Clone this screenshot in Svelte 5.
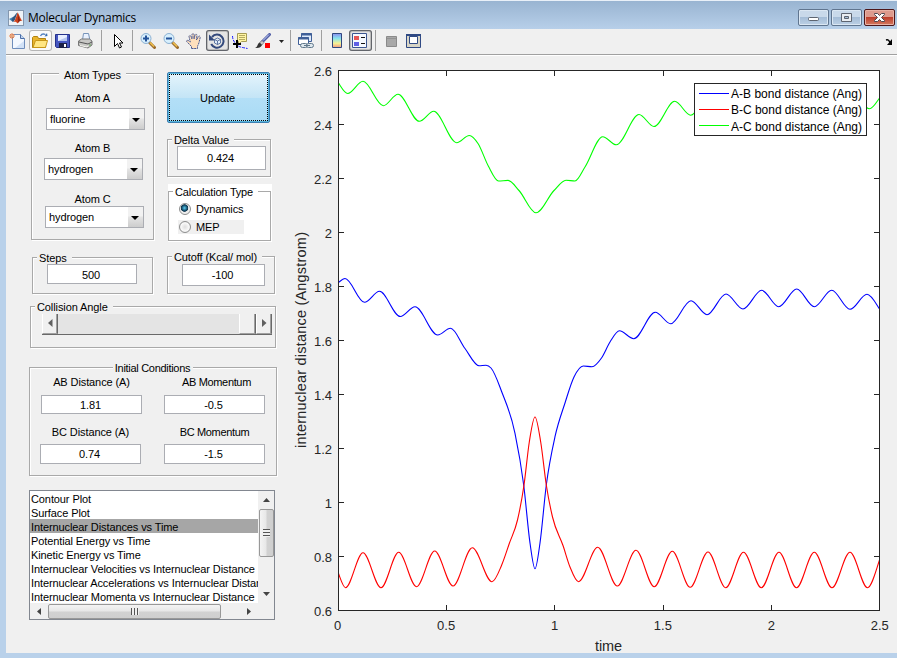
<script lang="ts">
    type Point = [number, number];

    let selectedPlot = $state(2);
    let calculation = $state('Dynamics');

    const plots = [
        'Contour Plot',
        'Surface Plot',
        'Internuclear Distances vs Time',
        'Potential Energy vs Time',
        'Kinetic Energy vs Time',
        'Internuclear Velocities vs Internuclear Distance',
        'Internuclear Accelerations vs Internuclear Distance',
        'Internuclear Momenta vs Internuclear Distance'
    ];

    const atoms = [
        { id: 'a', label: 'Atom A', value: 'fluorine' },
        { id: 'b', label: 'Atom B', value: 'hydrogen' },
        { id: 'c', label: 'Atom C', value: 'hydrogen' }
    ];

    // turning points of each trajectory
    const ab: Point[] = [
        [338.5, 282.5], [345, 278.5], [364.5, 302.3], [379.5, 291.3], [400.3, 316.5], [415, 306.8],
        [437.7, 335], [450.5, 328.3], [465, 348.5], [479, 365.7], [486, 365.3], [491, 368], [501.7, 391.7],
        [515, 433.3], [523.7, 485], [530, 543], [535, 568.7], [540, 543], [546.3, 485], [555, 436.7],
        [565, 403], [574, 377], [583.3, 366], [592, 366.7], [601.5, 358], [610, 342], [619.5, 330.8],
        [633.7, 338.7], [655.3, 312.3], [670.7, 323.7], [691, 300.7], [707, 314.7], [726, 294],
        [743, 309], [761.7, 290.3], [778.7, 306.7], [796.7, 289], [814.3, 306.7], [831.7, 290.3],
        [850, 309.3], [867, 294.3], [879.5, 309]
    ];
    const bc: Point[] = [
        [338.5, 573.5], [345.5, 587.7], [363, 552.7], [381, 587.7], [398.7, 552.3], [416.5, 586.7],
        [434.7, 551], [453, 586], [472.3, 547.7], [492, 581.7], [501.7, 565], [509.3, 543.5],
        [517.5, 520], [524, 485], [529.3, 442], [535, 417], [540.7, 442], [546.3, 485], [552.5, 517],
        [563, 545.5], [570, 567], [578.5, 581.7], [597.7, 547.3], [617.3, 586], [636, 550.3],
        [654.2, 586.7], [672.3, 551.3], [690.2, 587.3], [708, 552], [725.7, 587.7], [743.5, 552.3],
        [761.3, 587.7], [779, 552.3], [796.5, 587.7], [814.3, 552.3], [832, 587.7], [850, 552.3],
        [867.5, 587.7], [879.5, 560]
    ];
    const ac: Point[] = [
        [338.5, 83], [347.7, 93.5], [363, 81.3], [383.3, 105.7], [398, 94.3], [419.3, 121.3],
        [433.7, 111.3], [456.7, 142.7], [469.3, 135.5], [478, 143.5], [488.3, 166], [498.5, 181],
        [508, 180.4], [519, 190.5], [536, 212.8], [554, 190.5], [566, 180.2], [575, 181],
        [585, 167], [602.7, 136.7], [616.3, 144.8], [639, 114.5], [654, 126.5], [674.7, 101.3],
        [690.7, 115.2], [710, 95], [727, 108], [746, 92], [763, 106], [781, 92], [798, 104],
        [816, 92], [834, 106], [852, 94], [869.5, 108.8], [879.5, 98]
    ];

    // monotone cubic interpolation, flat at every extremum
    function curve(pts: Point[]) {
        const d = pts.slice(1).map((p, i) => (p[1] - pts[i][1]) / (p[0] - pts[i][0]));
        const m = pts.map((_, i) => {
            if (i === 0) return d[0] * 1.3;
            if (i === pts.length - 1) return d[i - 1] * 1.3;
            const a = d[i - 1];
            const b = d[i];
            if (a * b <= 0) return 0;
            const h0 = pts[i][0] - pts[i - 1][0];
            const h1 = pts[i + 1][0] - pts[i][0];
            const slope = (a * h1 + b * h0) / (h0 + h1);
            return Math.sign(slope) * Math.min(Math.abs(slope), 3 * Math.abs(a), 3 * Math.abs(b));
        });
        let path = `M${pts[0][0]},${pts[0][1]}`;
        for (let i = 1; i < pts.length; i++) {
            const [x0, y0] = pts[i - 1];
            const [x1, y1] = pts[i];
            const h = (x1 - x0) / 3;
            path += `C${x0 + h},${y0 + m[i - 1] * h} ${x1 - h},${y1 - m[i] * h} ${x1},${y1}`;
        }
        return path;
    }

    const series = [
        { name: 'A-B bond distance (Ang)', color: '#0000ff', path: curve(ab) },
        { name: 'B-C bond distance (Ang)', color: '#ff0000', path: curve(bc) },
        { name: 'A-C bond distance (Ang)', color: '#00ff00', path: curve(ac) }
    ];

    const xTicks = ['0', '0.5', '1', '1.5', '2', '2.5'];
    const yTicks = ['2.6', '2.4', '2.2', '2', '1.8', '1.6', '1.4', '1.2', '1', '0.8', '0.6'];
</script>

<div class="window">
    <header class="titlebar">
        <svg class="logo" width="16" height="16" viewBox="0 0 16 16">
            <rect x=".5" y=".5" width="15" height="15" fill="#eef3f8" stroke="#8497ae" />
            <path d="M1 9l4-2 2 2-2 3z" fill="#3f83b5" />
            <path d="M5 7c2-1 3-4 4.500-4.500L7 9.500 5 12 3.500 10z" fill="#31567f" />
            <path d="M9.500 2.500c1.500 1 2.500 6 5 8.500-2-.5-3 0-5 2.500-1-1.500-2-2-4-1.500 2-2 3-6 4-9.500z" fill="#cf431c" />
            <path d="M9.500 3c1 2 0 6 .5 10 1-1.500 1.500-2 2.500-2.500-1.500-2-2-5-3-7.500z" fill="#8c2314" />
        </svg>
        <h1>Molecular Dynamics</h1>
        <div class="controls">
            <button aria-label="Minimize">
                <svg width="29" height="16"><rect x="9.500" y="8.500" width="10" height="3" rx="1" fill="#fff" stroke="#5d6470" /></svg>
            </button>
            <button aria-label="Maximize">
                <svg width="29" height="16"><path d="M9.500 4.500h10v8h-10zM12.500 7.500h4v2h-4z" fill="#e9edf2" fill-rule="evenodd" stroke="#5d6470" /></svg>
            </button>
            <button class="close" aria-label="Close">
                <svg width="29" height="16"><path d="M9.500 4.500h3l2 2 2-2h3v1l-3 3 3 3v1h-3l-2-2-2 2h-3v-1l3-3-3-3z" fill="#fff" stroke="#4f4a52" /></svg>
            </button>
        </div>
    </header>

    <nav class="toolbar">
        <button aria-label="New figure">
            <svg viewBox="0 0 16 16">
                <path d="M3.500 1.500h8l4 4v10h-12z" fill="#f3f8ff" stroke="#6f8ebc" />
                <path d="M6 15h9V8z" fill="#d2e2f7" />
                <path d="M11.500 1.500v4h4" fill="#c3d5ee" stroke="#4b6ea8" />
                <path d="M3 0v6M0 3h6M1 1l4 4M5 1L1 5" stroke="#e98550" stroke-width="1" />
                <circle cx="3" cy="3" r="1.200" fill="#fff0bb" stroke="#c8502a" stroke-width=".6" />
            </svg>
        </button>
        <button class="hover" aria-label="Open file">
            <svg viewBox="0 0 16 16">
                <path d="M.5 14.500v-10l1-1h4l1 2h7v9z" fill="#e9b42c" stroke="#b28310" />
                <path d="M1 14.500l2.500-7h12l-2 7z" fill="#ffe683" stroke="#c79618" />
                <path d="M8.500 3c1-2 3-2.500 5-1.500" fill="none" stroke="#4f7fc0" stroke-width="1.300" />
                <path d="M12.500 3.500l3-.5-.5-3z" fill="#376cae" />
            </svg>
        </button>
        <button aria-label="Save figure">
            <svg viewBox="0 0 16 16">
                <path d="M.5 1.500h14v13h-13l-1-1z" fill="#4657c0" stroke="#25318b" />
                <path d="M3 2h9v6H3z" fill="#e7eeff" />
                <path d="M3 8h9V4z" fill="#b4c4ee" />
                <path d="M4 10h8v5H4z" fill="#1b2047" />
                <path d="M9 11h2v3H9z" fill="#fff" />
            </svg>
        </button>
        <button aria-label="Print figure">
            <svg viewBox="0 0 16 16">
                <path d="M4.500 7l1-6.500h5l1.500 7z" fill="#e9f2ff" stroke="#7794ba" />
                <path d="M.5 8l3-2h8l2.500 2v4l-4 3-9.500-2.500z" fill="#c8c8c5" stroke="#777" />
                <path d="M1 9l9 2 4-2" fill="none" stroke="#555" />
                <path d="M2 12.500l7 1.500 1-1.500" fill="none" stroke="#f7f7ef" />
                <path d="M11 12h2" stroke="#58a34d" />
            </svg>
        </button>
        <i></i>
        <button aria-label="Edit plot">
            <svg viewBox="0 0 16 16"><path d="M5.500 1.500v12l3-3 2 4.500 2-1-2-4h3.500z" fill="#fff" stroke="#000" /></svg>
        </button>
        <i></i>
        <button aria-label="Zoom in">
            <svg viewBox="0 0 16 16">
                <path d="M9.500 9.500l5 5" stroke="#9b6c2d" stroke-width="3" stroke-linecap="round" />
                <path d="M10 9.500l4 4" stroke="#f2c34e" stroke-width="1.500" />
                <circle cx="6" cy="5.500" r="5" fill="#d7effd" stroke="#8bb0d2" />
                <path d="M6 2.500v6M3 5.500h6" stroke="#24539a" stroke-width="2" />
            </svg>
        </button>
        <button aria-label="Zoom out">
            <svg viewBox="0 0 16 16">
                <path d="M9.500 9.500l5 5" stroke="#9b6c2d" stroke-width="3" stroke-linecap="round" />
                <path d="M10 9.500l4 4" stroke="#f2c34e" stroke-width="1.500" />
                <circle cx="6" cy="5.500" r="5" fill="#d7effd" stroke="#8bb0d2" />
                <path d="M3 5.500h6" stroke="#24539a" stroke-width="2" />
            </svg>
        </button>
        <button aria-label="Pan">
            <svg viewBox="0 0 16 16">
                <path d="M5.500 15.500v-2L.7 8.500c-.5-1.200.8-1.500 1.600-1l2 1.500L3 3.500c0-1.300 1.500-1.300 2 0L6 6V1.500c.2-1.200 1.800-1.200 2 0V6l1-4c.5-1.200 2-.8 2 .4L10.500 7l2-3.500c.8-.8 2-.2 1.700 1L13 9.500c-.3 2-1.500 3-1.500 4v2z" fill="#ffe0bd" stroke="#4d5b91" stroke-dasharray="2 .6" />
            </svg>
        </button>
        <button class="pressed" aria-label="Rotate 3D">
            <svg viewBox="0 0 16 16">
                <path d="M3 4a6.500 6.500 0 1 1-.8 7" fill="none" stroke="#33497c" stroke-width="2" />
                <path d="M0 1.500v6h6z" fill="#33497c" />
                <path d="M5.500 6.500l3-1.500 3 1.500v3.500l-3 1.500-3-1.500zM5.500 6.500l3 1.500 3-1.500M8.500 8v3.500" fill="#e1ecf9" stroke="#405c91" stroke-width=".8" />
            </svg>
        </button>
        <button aria-label="Data cursor">
            <svg viewBox="0 0 16 16">
                <path d="M.5 3c0 5 4 10 8 11s5 1 7 1.500" fill="none" stroke="#1c1cff" stroke-dasharray="3 1" />
                <path d="M5.500.5h9v8h-5l-3 3v-3h-1z" fill="#fff5a5" stroke="#a69c55" />
                <path d="M7 2.500h6M7 4.500h6M7 6.500h6" stroke="#b5ab60" />
                <path d="M5 7v8M1 11h8" stroke="#000" stroke-width="2" />
            </svg>
        </button>
        <button aria-label="Brush data">
            <svg viewBox="0 0 16 16">
                <path d="M14.500 1.500L7 9" stroke="#505ea6" stroke-width="3" stroke-linecap="round" />
                <path d="M14 1.500L8 7.500" stroke="#c9d3fa" />
                <path d="M7 7.500L4.500 10 7 12l2-2.500z" fill="#c8c8c8" stroke="#666" stroke-width=".6" />
                <path d="M0 15c3-1 2-4 4.500-5.500L7 12c-1.500 3-4 3-7 3z" fill="#333" />
                <path d="M10 10h5v5h-5z" fill="#f00" />
            </svg>
        </button>
        <button class="dropdown" aria-label="Brush colour">
            <svg viewBox="0 0 12 16"><path d="M4 7h5L6.500 10z" fill="#222" /></svg>
        </button>
        <i></i>
        <button aria-label="Link plot">
            <svg viewBox="0 0 16 16">
                <path d="M3.500.5h10v8h-10z" fill="#dce9fb" stroke="#3f5f97" />
                <path d="M3 1.500h11" stroke="#3f5f97" stroke-width="2" />
                <path d="M.5 4.500h10v7H.5z" fill="#fff" stroke="#3f5f97" />
                <path d="M0 5.500h11" stroke="#3f5f97" stroke-width="2" />
                <rect x="2.500" y="10.500" width="7" height="4" rx="2" fill="#dde6ec" stroke="#60788c" />
                <rect x="8.500" y="10.500" width="7" height="4" rx="2" fill="#dde6ec" stroke="#60788c" />
                <path d="M6 12.500h6" stroke="#60788c" />
            </svg>
        </button>
        <i></i>
        <button aria-label="Insert colorbar">
            <svg viewBox="0 0 16 16">
                <defs>
                    <linearGradient id="bar" x2="0" y2="1">
                        <stop offset="0" stop-color="#8b8df0" />
                        <stop offset=".35" stop-color="#87e4ed" />
                        <stop offset=".7" stop-color="#f7f395" />
                        <stop offset="1" stop-color="#f29a82" />
                    </linearGradient>
                </defs>
                <path d="M3.500.5h9v14h-9z" fill="url(#bar)" stroke="#30487e" />
            </svg>
        </button>
        <button class="pressed" aria-label="Insert legend">
            <svg viewBox="0 0 16 16">
                <path d="M.5.5h14v14H.5z" fill="#f5f9ff" stroke="#3c5690" />
                <path d="M2 3h5v4H2z" fill="#e75656" />
                <path d="M2 9h5v4H2z" fill="#6060e5" />
                <path d="M9 4.500h4M9 10.500h4" stroke="#111" />
            </svg>
        </button>
        <i></i>
        <button aria-label="Hide plot tools">
            <svg viewBox="0 0 16 16"><path d="M3.500 3.500h10v10h-10z" fill="#a8a8a8" stroke="#8a8a8a" /><path d="M4 5.500h9" stroke="#929292" /></svg>
        </button>
        <button aria-label="Show plot tools">
            <svg viewBox="0 0 16 16">
                <path d="M.5 1.500h14v13H.5z" fill="#d8d5c6" stroke="#304a84" />
                <path d="M0 2h15" stroke="#304a84" stroke-width="2" />
                <path d="M3.500 3.500h8v7h-8z" fill="#fff" stroke="#304a84" />
            </svg>
        </button>
        <svg class="dock" viewBox="0 0 8 8"><path d="M1 2q3-1 4 3" fill="none" stroke="#000" stroke-width="1.500" /><path d="M7 1v6H2z" /></svg>
    </nav>

    <main>
        <aside>
            <div class="columns">
                <div class="left">
                    <section class="group atoms">
                        <h2>Atom Types</h2>
                        {#each atoms as atom}
                            <span class="label">{atom.label}</span>
                            <button class="select {atom.id}">
                                {atom.value}
                                <svg width="15" height="20"><path d="M3 9h8l-4 4z" /></svg>
                            </button>
                        {/each}
                    </section>
                    <section class="group steps">
                        <h2>Steps</h2>
                        <div class="field">500</div>
                    </section>
                </div>
                <div class="right">
                    <button class="update"><span>Update</span></button>
                    <section class="group delta">
                        <h2>Delta Value</h2>
                        <div class="field">0.424</div>
                    </section>
                    <div class="calc">
                        <section class="group">
                            <h2>Calculation Type</h2>
                            {#each ['Dynamics', 'MEP'] as type}
                                <button class="radio {type}" onclick={() => (calculation = type)}>
                                    <span class="dot" class:on={calculation === type}></span>{type}
                                </button>
                            {/each}
                        </section>
                    </div>
                    <section class="group cutoff">
                        <h2>Cutoff (Kcal/ mol)</h2>
                        <div class="field">-100</div>
                    </section>
                </div>
            </div>

            <section class="group angle">
                <h2>Collision Angle</h2>
                <div class="slider">
                    <button class="step" aria-label="Decrease"><svg width="14" height="20"><path d="M9.500 5v8L5 9z" /></svg></button>
                    <div class="track"></div>
                    <div class="step thumb"></div>
                    <button class="step" aria-label="Increase"><svg width="14" height="20"><path d="M5 5v8l4.500-4z" /></svg></button>
                </div>
            </section>

            <section class="group initial">
                <h2>Initial Conditions</h2>
                <div class="conditions">
                    <div>
                        <span class="label">AB Distance (A)</span>
                        <div class="field">1.81</div>
                    </div>
                    <div class="momentum">
                        <span class="label">AB Momentum</span>
                        <div class="field">-0.5</div>
                    </div>
                </div>
                <div class="conditions second">
                    <div>
                        <span class="label">BC Distance (A)</span>
                        <div class="field">0.74</div>
                    </div>
                    <div class="momentum">
                        <span class="label">BC Momentum</span>
                        <div class="field">-1.5</div>
                    </div>
                </div>
            </section>

            <div class="listbox">
                <ul>
                    {#each plots as plot, i}
                        <li class:selected={i === selectedPlot}>
                            <button onclick={() => (selectedPlot = i)}>{plot}</button>
                        </li>
                    {/each}
                </ul>
                <div class="vscroll">
                    <svg width="7" height="4"><path d="M0 4L3.500 0 7 4z" /></svg>
                    <div class="handle"><b></b></div>
                    <svg width="7" height="4"><path d="M0 0l3.500 4L7 0z" /></svg>
                </div>
                <div class="hscroll">
                    <svg width="4" height="7"><path d="M4 0L0 3.500 4 7z" /></svg>
                    <div class="handle"><b></b></div>
                    <svg width="4" height="7"><path d="M0 0l4 3.500L0 7z" /></svg>
                </div>
            </div>
        </aside>

        <svg class="plot" viewBox="289 56 608 597">
            <rect x="338.500" y="70.500" width="541" height="540" fill="#fff" />
            {#each series as line}
                <path d={line.path} fill="none" stroke={line.color} stroke-width="1.100" />
            {/each}
            <g class="axes">
                <rect x="338.500" y="70.500" width="541" height="540" />
                {#each xTicks as _, i}
                    <path d="M{338.5 + Math.round(i * 108.2)} 610v-5m0-529v-5" />
                {/each}
                {#each yTicks as _, i}
                    <path d="M339 {70.5 + i * 54}h5m530 0h5" />
                {/each}
            </g>
            <g class="ticks">
                {#each xTicks as tick, i}
                    <text x={337.7 + i * 108.4} y="630" text-anchor="middle">{tick}</text>
                {/each}
                {#each yTicks as tick, i}
                    <text x="332" y={76 + i * 54} text-anchor="end">{tick}</text>
                {/each}
            </g>
            <g class="names">
                <text x="595" y="651" textLength="27">time</text>
                <text transform="translate(306 448) rotate(-90)" textLength="216">internuclear distance (Angstrom)</text>
            </g>
            <rect x="694.500" y="83.500" width="172" height="52" fill="#fff" stroke="#262626" />
            {#each series as line, i}
                <path d="M699 {93.5 + i * 16}h30" stroke={line.color} />
                <text class="key" x="731" y={98 + Math.floor(i * 16.5)} textLength="131">{line.name}</text>
            {/each}
        </svg>
    </main>
</div>

<style>
    :global(body) {
        margin: 0;
        overflow: hidden;
    }
    * {
        box-sizing: border-box;
    }
    h1, h2, ul {
        margin: 0;
        padding: 0;
        font-weight: normal;
    }
    button {
        margin: 0;
        padding: 0;
        border: 0;
        background: none;
        font: inherit;
        color: inherit;
        letter-spacing: inherit;
    }
    svg {
        display: block;
        flex: none;
    }
    .window {
        width: 897px;
        height: 658px;
        display: flex;
        flex-direction: column;
        border: solid #b9d1ea;
        border-width: 0 0 5px 6px;
        background: #f0f0f0;
        font: 11px/14px "Liberation Sans", Arial, sans-serif;
        color: #000;
    }
    .titlebar {
        height: 29px;
        margin-left: -6px;
        padding: 9px 2px 0 8px;
        display: flex;
        align-items: flex-start;
        border-top: 1px solid #e9f0f8;
        background: linear-gradient(#99b4d1, #b7cfe9);
    }
    .titlebar h1 {
        margin: -1px 0 0 4px;
        font: 12px/17px "Open Sans", "Noto Sans", sans-serif;
        letter-spacing: -.28px;
    }
    .controls {
        display: flex;
        gap: 2px;
        margin: -1px 0 0 auto;
    }
    .controls button {
        width: 31px;
        height: 17px;
        border: 1px solid #60758f;
        border-radius: 2px;
        background: linear-gradient(#c9d9ea 45%, #a5bdd7 50%, #bcd0e5);
        box-shadow: inset 0 0 0 1px #dbe7f3;
    }
    .controls .close {
        border-color: #4d1719;
        background: linear-gradient(#dd9a8d 45%, #bd3e2c 50%, #d47b60);
        box-shadow: inset 0 0 0 1px #e9b2a6;
    }
    .controls svg {
        margin-top: -1px;
    }
    .toolbar {
        height: 27px;
        display: flex;
        padding-top: 1px;
        border-bottom: 1px solid #fff;
        box-shadow: inset 0 -1px #a0a0a0;
    }
    .toolbar button {
        width: 23px;
        height: 21px;
        padding: 2px 3px;
        border-radius: 3px;
    }
    .toolbar button svg {
        width: 16px;
        height: 16px;
    }
    .toolbar .hover {
        background: #fafafa;
        box-shadow: inset 0 0 0 1px #b5b5b5;
    }
    .toolbar .pressed {
        background: #e4e4e4;
        box-shadow: inset 0 0 0 1px #62656b, inset 0 0 0 2px #bdbdbd;
    }
    .toolbar .dropdown {
        width: 12px;
        padding: 2px 0;
    }
    .toolbar .dropdown svg {
        width: 12px;
    }
    .toolbar i {
        width: 1px;
        height: 21px;
        margin: 0 4px 0 3px;
        background: #a0a0a0;
    }
    .dock {
        width: 8px;
        height: 8px;
        margin: 8px 4px 0 auto;
    }
    main {
        flex: 1;
        display: flex;
    }
    aside {
        width: 283px;
        padding-left: 23px;
        display: flex;
        flex-direction: column;
        align-items: flex-start;
        letter-spacing: -.1px;
    }
    .columns {
        display: flex;
        margin-left: 2px;
        height: 238px;
    }
    .left {
        width: 136px;
    }
    .group {
        display: flex;
        flex-direction: column;
        align-items: flex-start;
        border: 1px solid #a9a9a9;
        box-shadow: inset 1px 1px #fff, 1px 1px #fff;
    }
    .group h2 {
        height: 14px;
        margin: -7px 0 0 4px;
        padding: 0 5px 0 2px;
        font-size: 11px;
        background: #f0f0f0;
        white-space: nowrap;
    }
    .label {
        height: 14px;
        text-align: center;
        white-space: nowrap;
    }
    .field {
        display: flex;
        align-items: center;
        justify-content: center;
        padding-right: 2px;
        border: 1px solid #abadb3;
        background: #fff;
    }
    .atoms {
        width: 123px;
        height: 167px;
        margin-top: 17px;
    }
    .atoms h2 {
        align-self: center;
        margin: -6px 0 9px;
        padding: 0 5px;
    }
    .atoms .label {
        align-self: center;
    }
    .select {
        display: flex;
        align-items: center;
        justify-content: space-between;
        width: 99px;
        height: 22px;
        flex: none;
        padding-left: 3px;
        border: 1px solid #abadb3;
        background: #fff;
    }
    .select svg {
        background: linear-gradient(#f2f2f2 45%, #e4e4e4 50%, #cdcdcd);
    }
    .select.a {
        margin: 3px 0 11px 14px;
    }
    .select.b {
        margin: 3px 0 12px 12px;
    }
    .select.c {
        margin: 0 0 0 13px;
    }
    .steps {
        width: 121px;
        height: 37px;
        margin: 17px 0 0 1px;
    }
    .steps .field {
        width: 90px;
        height: 20px;
        margin: -1px 0 0 14px;
        padding-top: 1px;
    }
    .update {
        display: block;
        width: 103px;
        height: 51px;
        margin-top: 16px;
        padding: 1px;
        border: 1px solid #3c7fb1;
        border-radius: 2px;
        box-shadow: inset 0 0 0 1px #56b3dc;
        background: linear-gradient(#e5f4fc, #c4e5f6 50%, #b3dff7 51%, #a9dbf5);
    }
    .update span {
        display: flex;
        align-items: center;
        justify-content: center;
        width: 99px;
        height: 47px;
        padding-right: 2px;
        border: 1px dotted #000;
    }
    .delta {
        width: 104px;
        height: 38px;
        margin-top: 16px;
    }
    .delta .field {
        width: 89px;
        height: 24px;
        margin: -1px 0 0 9px;
    }
    .calc {
        width: 104px;
        height: 58px;
        margin: 7px 0 0 1px;
        padding-top: 7px;
        background: #fff;
    }
    .calc .group {
        width: 103px;
        height: 50px;
    }
    .calc h2 {
        margin-left: 4px;
        letter-spacing: -.2px;
        background: #fff;
    }
    .radio {
        display: flex;
        align-items: center;
        height: 14px;
        margin: 3px 0 0 9px;
        width: 66px;
    }
    .radio.MEP {
        background: #f0f0f0;
        margin-top: 4px;
    }
    .dot {
        width: 12px;
        height: 12px;
        margin: 0 5px 0 1px;
        border: 1px solid #8e8f8f;
        border-radius: 50%;
        background: radial-gradient(#dedede, #fafafa 60%, #c0c0c0);
    }
    .dot.on {
        background: radial-gradient(circle at 45% 40%, #5fd0f5 0, #15516f 32%, #12354c 42%, #eee 50%);
    }
    .cutoff {
        width: 108px;
        height: 38px;
        margin-top: 14px;
    }
    .cutoff .field {
        width: 83px;
        height: 22px;
        margin-left: 14px;
    }
    .angle {
        width: 246px;
        height: 42px;
        margin: 12px 0 0 1px;
    }
    .slider {
        display: flex;
        height: 21px;
        margin-left: 11px;
        width: 230px;
        border-bottom: 1px solid #696969;
    }
    .step {
        width: 16px;
        height: 20px;
        border: 1px solid #fff;
        border-top: 0;
        border-right: 1px solid #696969;
        border-bottom: 1px solid #a0a0a0;
        background: #f0f0f0;
        box-shadow: inset -1px 0 #a0a0a0;
    }
    .step path {
        fill: #606060;
    }
    .track {
        flex: 1;
        background: #e4e4e4;
    }
    .thumb {
        width: 17px;
    }
    .initial {
        width: 248px;
        height: 109px;
        margin-top: 19px;
    }
    .initial h2 {
        align-self: center;
        margin-left: 0;
        padding: 0 3px 0 2px;
        letter-spacing: -.3px;
    }
    .conditions {
        display: flex;
        gap: 22px;
        margin-left: 11px;
    }
    .conditions > div {
        width: 101px;
        display: flex;
        flex-direction: column;
    }
    .conditions .label {
        margin-bottom: 6px;
    }
    .conditions .momentum .label {
        padding-left: 4px;
        letter-spacing: -.35px;
    }
    .conditions .field {
        height: 19px;
    }
    .second {
        gap: 23px;
        margin: 11px 0 0 10px;
    }
    .conditions.second .label {
        margin-bottom: 5px;
    }
    .conditions.second .momentum .label {
        padding: 0;
    }
    .conditions.second .field {
        height: 20px;
    }
    .listbox {
        display: grid;
        grid-template: 112px 16px / 228px 16px;
        width: 246px;
        height: 130px;
        margin-top: 14px;
        border: 1px solid #828790;
        background: #f0f0f0;
    }
    .listbox ul {
        list-style: none;
        overflow: hidden;
        background: #fff;
    }
    .listbox li {
        height: 14px;
        padding: 1px 0 0 1px;
        white-space: nowrap;
    }
    .listbox li button {
        display: block;
        white-space: nowrap;
        text-align: left;
    }
    .selected {
        background: #a6a6a6;
    }
    .vscroll, .hscroll {
        display: flex;
        align-items: center;
    }
    .vscroll {
        flex-direction: column;
        padding: 7px 0;
    }
    .vscroll svg:last-child {
        margin-top: auto;
    }
    .hscroll {
        padding: 0 7px;
    }
    .hscroll svg:last-child {
        margin-left: auto;
    }
    .vscroll path, .hscroll path {
        fill: #444;
    }
    .handle {
        display: flex;
        align-items: center;
        justify-content: center;
        border: 1px solid #989898;
        border-radius: 2px;
    }
    .vscroll .handle {
        width: 15px;
        height: 48px;
        margin-top: 7px;
        background: linear-gradient(90deg, #f4f4f4, #e7e7e7 48%, #d2d2d2 52%, #cfcfcf);
    }
    .hscroll .handle {
        width: 173px;
        height: 15px;
        margin-left: 7px;
        background: linear-gradient(#f4f4f4, #e7e7e7 48%, #d2d2d2 52%, #cfcfcf);
    }
    .handle b {
        width: 8px;
        height: 7px;
        background: repeating-linear-gradient(90deg, #555 0 1px, #f0f0f0 1px 3px);
    }
    .vscroll .handle b {
        width: 7px;
        height: 8px;
        background: repeating-linear-gradient(#555 0 1px, #f0f0f0 1px 3px);
    }
    .plot {
        width: 608px;
        height: 597px;
    }
    .axes {
        fill: none;
        stroke: #262626;
    }
    .ticks {
        font-size: 13px;
        fill: #262626;
    }
    .names {
        font-size: 14.5px;
        fill: #262626;
    }
    .key {
        font-size: 12px;
    }
</style>
